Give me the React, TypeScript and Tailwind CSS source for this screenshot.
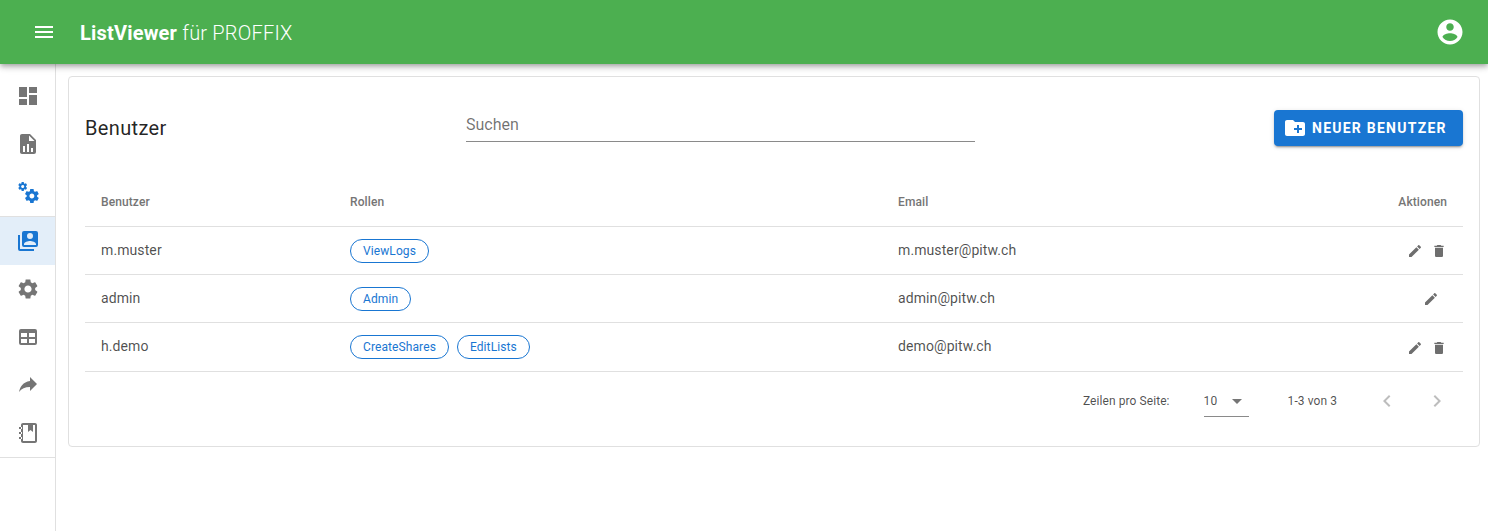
import React from "react";

const paths = {
  menu: "M3 18h18v-2H3v2zm0-5h18v-2H3v2zm0-7v2h18V6H3z",
  account: "M12 2C6.48 2 2 6.48 2 12s4.48 10 10 10 10-4.48 10-10S17.52 2 12 2zm0 3c1.66 0 3 1.34 3 3s-1.34 3-3 3-3-1.34-3-3 1.34-3 3-3zm0 14.2c-2.5 0-4.71-1.28-6-3.22.03-1.99 4-3.08 6-3.08 1.99 0 5.97 1.09 6 3.08-1.29 1.94-3.5 3.22-6 3.22z",
  dashboard: "M3 13h8V3H3v10zm0 8h8v-6H3v6zm10 0h8V11h-8v10zm0-18v6h8V3h-8z",
  fileChart: "M13,9H18.5L13,3.5V9M6,2H14L20,8V20A2,2 0 0,1 18,22H6C4.89,22 4,21.1 4,20V4C4,2.89 4.89,2 6,2M7,20H9V14H7V20M11,20H13V12H11V20M15,20H17V16H15V20Z",
  cogs: "M15.9,18.45C17.25,18.45 18.35,17.35 18.35,16C18.35,14.65 17.25,13.55 15.9,13.55C14.54,13.55 13.45,14.65 13.45,16C13.45,17.35 14.54,18.45 15.9,18.45M21.1,16.68L22.58,17.84C22.71,17.95 22.75,18.13 22.66,18.29L21.26,20.71C21.17,20.86 21,20.92 20.83,20.86L19.09,20.16C18.73,20.44 18.34,20.67 17.91,20.85L17.64,22.7C17.61,22.87 17.47,23 17.3,23H14.5C14.32,23 14.18,22.87 14.15,22.7L13.89,20.85C13.46,20.67 13.07,20.44 12.71,20.16L10.96,20.86C10.81,20.92 10.62,20.86 10.54,20.71L9.14,18.29C9.05,18.13 9.09,17.95 9.22,17.84L10.7,16.68L10.65,16L10.7,15.31L9.22,14.16C9.09,14.05 9.05,13.86 9.14,13.71L10.54,11.29C10.62,11.13 10.81,11.07 10.96,11.13L12.71,11.84C13.07,11.56 13.46,11.32 13.89,11.15L14.15,9.29C14.18,9.13 14.32,9 14.5,9H17.3C17.47,9 17.61,9.13 17.64,9.29L17.91,11.15C18.34,11.32 18.73,11.56 19.09,11.84L20.83,11.13C21,11.07 21.17,11.13 21.26,11.29L22.66,13.71C22.75,13.86 22.71,14.05 22.58,14.16L21.1,15.31L21.15,16L21.1,16.68M6.69,8.07C7.56,8.07 8.26,7.37 8.26,6.5C8.26,5.63 7.56,4.92 6.69,4.92A1.58,1.58 0 0,0 5.11,6.5C5.11,7.37 5.82,8.07 6.69,8.07M10.03,6.94L11,7.68C11.07,7.75 11.09,7.87 11.03,7.97L10.13,9.53C10.08,9.63 9.96,9.67 9.86,9.63L8.74,9.18L8,9.62L7.81,10.81C7.79,10.92 7.7,11 7.59,11H5.79C5.67,11 5.58,10.92 5.56,10.81L5.4,9.62L4.64,9.18L3.5,9.63C3.41,9.67 3.3,9.63 3.24,9.53L2.34,7.97C2.28,7.87 2.31,7.75 2.39,7.68L3.34,6.94L3.31,6.5L3.34,6.06L2.39,5.32C2.31,5.25 2.28,5.13 2.34,5.03L3.24,3.47C3.3,3.37 3.41,3.33 3.5,3.37L4.63,3.82L5.4,3.38L5.56,2.19C5.58,2.08 5.67,2 5.79,2H7.59C7.7,2 7.79,2.08 7.81,2.19L8,3.38L8.74,3.82L9.86,3.37C9.96,3.33 10.08,3.37 10.13,3.47L11.03,5.03C11.09,5.13 11.07,5.25 11,5.32L10.03,6.06L10.06,6.5L10.03,6.94Z",
  users: "M4,6H2V20A2,2 0 0,0 4,22H18V20H4V6M20,2A2,2 0 0,1 22,4V16A2,2 0 0,1 20,18H8A2,2 0 0,1 6,16V4A2,2 0 0,1 8,2H20M17,7A3,3 0 0,0 14,4A3,3 0 0,0 11,7A3,3 0 0,0 14,10A3,3 0 0,0 17,7M8,15V16H20V15C20,13 16,11.9 14,11.9C12,11.9 8,13 8,15Z",
  settings: "M19.14,12.94c0.04-0.3,0.06-0.61,0.06-0.94c0-0.32-0.02-0.64-0.07-0.94l2.03-1.58c0.18-0.14,0.23-0.41,0.12-0.61l-1.92-3.32c-0.12-0.22-0.37-0.29-0.59-0.22l-2.39,0.96c-0.5-0.38-1.03-0.7-1.62-0.94L14.4,2.81c-0.04-0.24-0.24-0.41-0.48-0.41h-3.84c-0.24,0-0.43,0.17-0.47,0.41L9.25,5.35C8.66,5.59,8.12,5.92,7.63,6.29L5.24,5.33c-0.22-0.08-0.47,0-0.59,0.22L2.74,8.87C2.62,9.08,2.66,9.34,2.86,9.48l2.03,1.58C4.84,11.36,4.8,11.69,4.8,12s0.02,0.64,0.07,0.94l-2.03,1.58c-0.18,0.14-0.23,0.41-0.12,0.61l1.92,3.32c0.12,0.22,0.37,0.29,0.59,0.22l2.39-0.96c0.5,0.38,1.03,0.7,1.62,0.94l0.36,2.54c0.05,0.24,0.24,0.41,0.48,0.41h3.84c0.24,0,0.44-0.17,0.47-0.41l0.36-2.54c0.59-0.24,1.13-0.56,1.62-0.94l2.39,0.96c0.22,0.08,0.47,0,0.59-0.22l1.92-3.32c0.12-0.22,0.07-0.47-0.12-0.61L19.14,12.94z M12,15.6c-1.98,0-3.6-1.62-3.6-3.6s1.62-3.6,3.6-3.6s3.6,1.62,3.6,3.6S13.98,15.6,12,15.6z",
  table: "M5,4H19A2,2 0 0,1 21,6V18A2,2 0 0,1 19,20H5A2,2 0 0,1 3,18V6A2,2 0 0,1 5,4M5,8V12H11V8H5M13,8V12H19V8H13M5,14V18H11V14H5M13,14V18H19V14H13Z",
  share: "M21,11L14,4V8C7,9 4,14 3,19C5.5,15.5 9,13.9 14,13.9V18L21,11Z",
  notebook: "M19 2H7C5.9 2 5 2.9 5 4V20C5 21.1 5.9 22 7 22H19C20.1 22 21 21.1 21 20V4C21 2.9 20.1 2 19 2ZM19 20H7V4H12V11L14.5 9L17 11V4H19V20ZM3 6H6V8H3ZM3 11H6V13H3ZM3 16H6V18H3Z",
  folderPlus: "M20 6h-8l-2-2H4c-1.11 0-1.99.89-1.99 2L2 18c0 1.11.89 2 2 2h16c1.11 0 2-.89 2-2V8c0-1.11-.89-2-2-2zm-1 8h-3v3h-2v-3h-3v-2h3V9h2v3h3v2z",
  edit: "M3 17.25V21h3.75L17.81 9.94l-3.75-3.75L3 17.25zM20.71 7.04c.39-.39.39-1.02 0-1.41l-2.34-2.34c-.39-.39-1.02-.39-1.41 0l-1.83 1.83 3.75 3.75 1.83-1.83z",
  trash: "M6 19c0 1.1.9 2 2 2h8c1.1 0 2-.9 2-2V7H6v12zM19 4h-3.5l-1-1h-5l-1 1H5v2h14V4z",
  prev: "M15.41 7.41L14 6l-6 6 6 6 1.41-1.41L10.83 12z",
  next: "M10 6L8.59 7.41 13.17 12l-4.58 4.59L10 18l6-6z",
  drop: "M7 10l5 5 5-5z",
};

function Icon({ d, className }: { d: string; className: string }) {
  return (
    <svg viewBox="0 0 24 24" fill="currentColor" className={className}>
      <path d={d} />
    </svg>
  );
}

const navItems = [
  { icon: paths.dashboard },
  { icon: paths.fileChart },
  { icon: paths.cogs, blue: true },
  { icon: paths.users, blue: true, active: true },
  { icon: paths.settings },
  { icon: paths.table },
  { icon: paths.share },
  { icon: paths.notebook },
];

const users = [
  { name: "m.muster", roles: ["ViewLogs"], email: "m.muster@pitw.ch", canDelete: true, h: "h-[48px]" },
  { name: "admin", roles: ["Admin"], email: "admin@pitw.ch", canDelete: false, h: "h-[48px]" },
  { name: "h.demo", roles: ["CreateShares", "EditLists"], email: "demo@pitw.ch", canDelete: true, h: "h-[49px]" },
];

export default function App() {
  return (
    <div className="flex h-screen flex-col overflow-hidden bg-white font-['Roboto',sans-serif] text-[#000000de]">
      {/* Top bar */}
      <header className="relative z-10 flex h-16 shrink-0 items-center bg-[#4caf50] pl-8 pr-[24px] text-white shadow-[0_2px_4px_-1px_rgba(0,0,0,0.2),0_4px_5px_0_rgba(0,0,0,0.14),0_1px_10px_0_rgba(0,0,0,0.12)]">
        <Icon d={paths.menu} className="h-6 w-6" />
        <div className="ml-6 pt-[1px] text-[20px] leading-8 tracking-[0.2px]">
          <span className="font-bold">ListViewer</span> <span className="font-light">für PROFFIX</span>
        </div>
        <Icon d={paths.account} className="ml-auto mr-[-1px] h-[30px] w-[30px]" />
      </header>

      <div className="flex min-h-0 flex-1">
        {/* Sidebar */}
        <aside className="w-14 shrink-0 border-r border-[#e0e0e0]">
          <nav className="border-b border-[#e0e0e0] pt-2">
            {navItems.map((item, i) => (
              <div
                key={i}
                className={`flex items-center pl-4 ${item.active ? "h-[49px] border-t border-[#e0e0e0] bg-[#e3eef9]" : "h-12"} ${item.blue ? "text-[#1976d2]" : "text-[#757575]"}`}
              >
                <Icon d={item.icon} className="h-6 w-6" />
              </div>
            ))}
          </nav>
        </aside>

        {/* Content */}
        <main className="min-w-0 flex-1 pt-3 pr-2 pl-3">
          <section className="rounded border border-[#e0e0e0] bg-white p-4">
            <div className="mb-[14px] flex h-[70px] items-center">
              <h1 className="w-[381px] text-[20px] font-normal leading-8 tracking-[0.35px]">Benutzer</h1>
              <div className="mb-1 flex h-8 w-[509px] items-start border-b border-[#8a8a8a] text-[16px] leading-[30px] text-[#0000008f]">
                Suchen
              </div>
              <button className="ml-auto flex h-9 w-[189px] items-center rounded bg-[#1976d2] pl-[9px] text-[14px] font-bold tracking-[1.25px] text-white shadow-[0_3px_1px_-2px_rgba(0,0,0,0.2),0_2px_2px_0_rgba(0,0,0,0.14),0_1px_5px_0_rgba(0,0,0,0.12)]">
                <Icon d={paths.folderPlus} className="mr-[5px] h-6 w-6" />
                NEUER BENUTZER
              </button>
            </div>

            {/* Table */}
            <div className="flex h-[50px] items-center border-b border-[#e0e0e0] text-[12px] font-medium tracking-[0.1px] text-[#757575]">
              <div className="w-[249px] pl-4">Benutzer</div>
              <div className="w-[548px] pl-4">Rollen</div>
              <div className="flex-1 pl-4">Email</div>
              <div className="pr-4">Aktionen</div>
            </div>
            {users.map((u) => (
              <div key={u.name} className={`flex ${u.h} items-center border-b border-[#e0e0e0] text-[14px] tracking-[0.1px] text-[#000000b3]`}>
                <div className="w-[249px] pb-[1px] pl-4">{u.name}</div>
                <div className="flex w-[548px] gap-2 pl-4">
                  {u.roles.map((r) => (
                    <span key={r} className="flex h-6 items-center rounded-full border border-[#1976d2] px-3 text-[12px] tracking-[0.1px] text-[#1976d2]">
                      {r}
                    </span>
                  ))}
                </div>
                <div className="flex-1 pb-[1px] pl-4">{u.email}</div>
                <div className={`flex pt-[1px] text-[#6e6e6e] ${u.canDelete ? "pr-3" : "pr-5"}`}>
                  <span className="flex w-6 justify-center">
                    <Icon d={paths.edit} className="h-4 w-4" />
                  </span>
                  {u.canDelete && (
                    <span className="flex w-6 justify-center">
                      <Icon d={paths.trash} className="h-4 w-4" />
                    </span>
                  )}
                </div>
              </div>
            ))}

            {/* Pagination */}
            <div className="flex h-[58px] items-center justify-end text-[12px] tracking-[0.08px] text-[#000000b3]">
              <span>Zeilen pro Seite:</span>
              <div className="relative ml-[34px] flex h-8 w-[45px] items-center border-b border-[#8a8a8a]">
                <span>10</span>
                <Icon d={paths.drop} className="absolute right-0 top-[4px] h-6 w-6 text-[#757575]" />
              </div>
              <span className="ml-[39px]">1-3 von 3</span>
              <div className="ml-[38px] mr-[14px] flex gap-[26px] text-[#bdbdbd]">
                <Icon d={paths.prev} className="h-6 w-6" />
                <Icon d={paths.next} className="h-6 w-6" />
              </div>
            </div>
          </section>
        </main>
      </div>
    </div>
  );
}
